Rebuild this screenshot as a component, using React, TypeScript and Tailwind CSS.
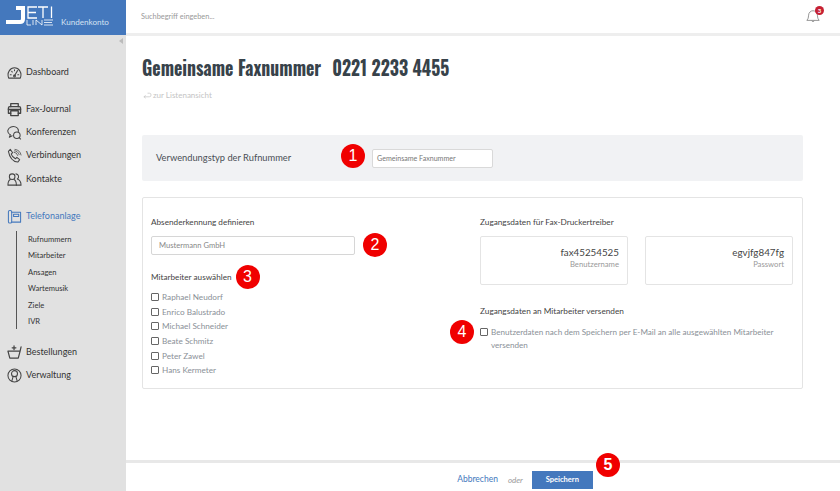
import React from "react";

const Ic = ({ children, className = "" }: { children: React.ReactNode; className?: string }) => (
  <svg viewBox="0 0 16 16" fill="none" stroke="#444" strokeWidth="1.100" strokeLinecap="round" strokeLinejoin="round" className={"w-[15px] h-[15px] shrink-0 " + className}>
    {children}
  </svg>
);

const icons: Record<string, React.ReactNode> = {
  dash: <><path d="M1.800 14C-.5 8 3.500 3 8 3s8.500 5 6.200 11z" /><path d="M8 11.500l3.200-5.500M3.500 10.500h1M11.500 10.500h1M5 6.800l.7.7M8 5v1" /><circle cx="8" cy="11.800" r="1" /></>,
  fax: <><path d="M4 5V1.800h8V5" strokeWidth="1.400" /><path d="M4 12H1.500V6.500q0-1.500 1.500-1.500h10q1.500 0 1.500 1.500V12H12" strokeWidth="1.400" /><path d="M4 9.500h8v5H4zM1.500 8h13" strokeWidth="1.400" /></>,
  conf: <><path d="M3.500 10.500C1 9 .5 7.500 1 5.500 2 2 6 1 9 2c2.500 1 3.500 3 3 5" /><path d="M3.500 10.500l-1 2.500 3-1.500" /><circle cx="10.500" cy="11" r="3.500" /><path d="M13 13.500l1.500 1.500" /></>,
  call: <><path d="M1.500 3.500L3.500 1.500 6 5 4.500 6.500q1 3 4.500 5L10.500 10l3 2.500-2 2.500Q3.500 14 1.500 3.500z" /><path d="M7.500 4.500q3 0 4 3.500M8.500 1.500q5.500.5 6.500 6M8 3q3.500 0 5 4" strokeWidth=".8" /></>,
  users: <><circle cx="5.500" cy="5" r="3" /><path d="M3.500 8C1.500 9 1 11 1 14h9c0-3-.5-5-2.500-6" /><path d="M9.500 2a3 3 0 0 1 1.500 5.500c2.500 1 4 3 4 6.500h-5" /></>,
  phone: <><rect x="1.500" y="1.500" width="3.500" height="13.500" rx="1.500" /><path d="M5 3.500h9.500v10.500H5" /><path d="M7 5.500h5.500v2.500H7z" /></>,
  cart: <><path d="M1 6.500l2 7.500h9l2-7.500zM1 6.500h13M14 6.500l1-4.500" strokeWidth="1.300" /><path d="M7.500 1v4M5.500 3h4" strokeWidth="1.300" /></>,
  admin: <><circle cx="8" cy="8" r="7" /><circle cx="8" cy="6" r="3.200" /><path d="M6.500 9.200l-1.300 4.500M9.500 9.200l1.300 4.500" /></>,
};

const NavItem = ({ icon, label, active = false, className = "" }: { icon: string; label: string; active?: boolean; className?: string }) => (
  <div className={"flex items-center gap-[4px] pl-[7px] h-[16px] " + className}>
    <Ic className={active ? "[&_*]:stroke-[#4478bd]" : ""}>{icons[icon]}</Ic>
    <span className={"text-[9px] leading-[16px] " + (active ? "text-[#4478bd]" : "text-[#333]")}>{label}</span>
  </div>
);

const Badge = ({ n, className = "" }: { n: number; className?: string }) => (
  <span className={"w-[24px] h-[24px] rounded-full bg-[#f00000] text-white flex items-center justify-center text-[16px] leading-none shrink-0 " + className} style={{ fontFamily: "Liberation Sans, sans-serif" }}>
    {n}
  </span>
);

const Check = ({ className = "" }: { className?: string }) => (
  <span className={"w-[6px] h-[6px] box-content border border-[#666] bg-white shrink-0 rounded-[1px] " + className} />
);

const names = ["Raphael Neudorf", "Enrico Balustrado", "Michael Schneider", "Beate Schmitz", "Peter Zawel", "Hans Kermeter"];
const subs = ["Rufnummern", "Mitarbeiter", "Ansagen", "Wartemusik", "Ziele", "IVR"];

export default function App() {
  return (
    <div className="w-[840px] h-[491px] flex overflow-hidden bg-white text-[#333]" style={{ fontFamily: "Lato, sans-serif" }}>
      <aside className="w-[126px] shrink-0 flex flex-col bg-[#e1e1e1]">
        <div className="h-[35px] bg-[#4478bd] flex items-start">
          <svg viewBox="0 0 56 30" className="w-[56px] h-[30px] shrink-0" fill="none" stroke="#fff">
            <path d="M16 8h7v11q0 3-3 3H6" strokeWidth="4" />
            <path d="M37 7h-9v11h9M28 12.500h8M38 7h10M43 7v11M51.500 6.500v11.500" strokeWidth="1.300" />
            <path d="M27 20v5h4M33 20v5M36 25v-5l6 5v-5M53 20h-9M44 22.500h8M44 25h9" strokeWidth=".8" />
          </svg>
          <span className="mt-[16px] ml-[5px] text-[8.100px] leading-[12px] text-[#d4e1f2]">Kundenkonto</span>
        </div>
        <div className="flex justify-end pr-[3px] pt-[3px] h-[10px]">
          <span className="w-0 h-0 border-y-[3px] border-y-transparent border-r-[4px] border-r-[#bbb]" />
        </div>
        <div className="flex flex-col mt-[19px]">
          <NavItem icon="dash" label="Dashboard" />
          <NavItem icon="fax" label="Fax-Journal" className="mt-[21px]" />
          <NavItem icon="conf" label="Konferenzen" className="mt-[7px]" />
          <NavItem icon="call" label="Verbindungen" className="mt-[7px]" />
          <NavItem icon="users" label="Kontakte" className="mt-[8px]" />
          <NavItem icon="phone" label="Telefonanlage" active className="mt-[21px]" />
          <div className="ml-[16px] mt-[7px] border-l border-[#555] pl-[11px] flex flex-col h-[98px] gap-[0px]">
            {subs.map((s) => (
              <div key={s} className="text-[7.600px] leading-[16.400px] text-[#333]">{s}</div>
            ))}
          </div>
          <NavItem icon="cart" label="Bestellungen" className="mt-[15px]" />
          <NavItem icon="admin" label="Verwaltung" className="mt-[7px]" />
        </div>
      </aside>

      <main className="flex-1 flex flex-col min-w-0">
        <div className="h-[36px] shrink-0 border-b-[3px] border-[#eeeeee] flex items-center justify-between pl-[15px] pr-[20px]">
          <span className="text-[7.400px] text-[#999] mb-[-1px]">Suchbegriff eingeben...</span>
          <div className="relative w-[14px] h-[14px] mb-[1px]">
            <svg viewBox="0 0 16 16" fill="none" stroke="#888" strokeWidth="1" className="w-[14px] h-[14px]">
              <path d="M1 13h14q-2-2-2-6a5 5 0 0 0-10 0q0 4-2 6zM6.500 13.500q1.500 2 3 0" />
            </svg>
            <span className="absolute -top-[3px] -right-[4px] w-[9px] h-[9px] rounded-full bg-[#c62033] text-white text-[6px] leading-[9px] text-center font-bold">3</span>
          </div>
        </div>

        <div className="flex-1 pl-[16px] pr-[37px] min-h-0">
          <h1 className="mt-[17px] text-[21px] leading-[28px] font-bold text-[#37424a] whitespace-pre origin-left scale-x-[0.845]" style={{ fontFamily: '"Liberation Sans Narrow", Oswald, "Liberation Sans", sans-serif' }}>
            Gemeinsame Faxnummer<span className="ml-[13px]">0221 2233 4455</span>
          </h1>
          <div className="mt-[8px] flex items-center gap-[1px] text-[8px] leading-[12px] text-[#c4c4c4] ml-[1px]">
            <svg viewBox="0 0 10 8" fill="none" stroke="#c4c4c4" strokeWidth="0.800" className="w-[9px] h-[8px]">
              <path d="M1 6h6q2 0 2-2t-2-2H5M1 6l2-1.500M1 6l2 1.500" />
            </svg>
            zur Listenansicht
          </div>

          <section className="mt-[34px] h-[46px] bg-[#f1f2f4] rounded-[2px] flex items-center pl-[14px]">
            <span className="w-[185px] text-[9.300px] text-[#4a4f55]">Verwendungstyp der Rufnummer</span>
            <Badge n={1} className="mr-[7px] mb-[4px]" />
            <div className="w-[121px] h-[19px] bg-white rounded-[2px] border border-[#d9d9d9] pl-[4px] text-[7.100px] leading-[17px] text-[#777]">Gemeinsame Faxnummer</div>
          </section>

          <section className="mt-[16px] h-[192px] border border-[#e4e4e4] rounded-[2px] flex pl-[8px] pr-[9px]">
            <div className="w-[280px] pt-[18px] shrink-0">
              <div className="text-[8.200px] leading-[12px] text-[#444]">Absenderkennung definieren</div>
              <div className="mt-[5px] flex items-center gap-[8px]">
                <div className="w-[204px] h-[19px] border border-[#d6d6d6] rounded-[2px] pl-[7px] text-[7.600px] leading-[17px] text-[#888]">Mustermann GmbH</div>
                <Badge n={2} />
              </div>
              <div className="mt-[8px] flex items-center gap-[4px]">
                <span className="text-[8.200px] leading-[12px] text-[#444]">Mitarbeiter auswählen</span>
                <Badge n={3} />
              </div>
              <div className="mt-[1px] flex flex-col">
                {names.map((n) => (
                  <div key={n} className="h-[14.600px] flex items-center gap-[3px]">
                    <Check />
                    <span className="text-[8.200px] text-[#8a9097]">{n}</span>
                  </div>
                ))}
              </div>
            </div>
            <div className="flex-1 pl-[49px] pt-[18px] min-w-0">
              <div className="text-[8.250px] leading-[12px] text-[#444]">Zugangsdaten für Fax-Druckertreiber</div>
              <div className="mt-[8px] flex gap-[17px]">
                <div className="flex-1 h-[49px] border border-[#e4e4e4] rounded-[2px] pr-[8px] pt-[8px] text-right">
                  <div className="text-[9.800px] leading-[14px] text-[#444]">fax45254525</div>
                  <div className="text-[7.700px] leading-[11px] text-[#999]">Benutzername</div>
                </div>
                <div className="flex-1 h-[49px] border border-[#e4e4e4] rounded-[2px] pr-[8px] pt-[8px] text-right">
                  <div className="text-[9.800px] leading-[14px] text-[#444]">egvjfg847fg</div>
                  <div className="text-[7.700px] leading-[11px] text-[#999]">Passwort</div>
                </div>
              </div>
              <div className="mt-[20px] text-[8.250px] leading-[12px] text-[#444]">Zugangsdaten an Mitarbeiter versenden</div>
              <div className="relative mt-[9px] flex gap-[3px]">
                <Badge n={4} className="absolute -left-[30px] -top-[6px]" />
                <Check className="mt-[2px]" />
                <span className="text-[8.100px] leading-[12.500px] text-[#8a9097]">Benutzerdaten nach dem Speichern per E-Mail an alle ausgewählten Mitarbeiter versenden</span>
              </div>
            </div>
          </section>
        </div>

        <footer className="h-[31px] shrink-0 border-t-[3px] border-[#e8e8e8] flex items-center justify-center">
          <div className="flex items-center ml-[84px] mt-[5px]">
            <span className="text-[8.500px] text-[#4478bd]">Abbrechen</span>
            <span className="text-[8px] italic text-[#999] ml-[10px] mr-[9px]">oder</span>
            <div className="relative w-[61px] h-[18px] bg-[#4478bd] text-white text-[7.500px] leading-[18px] text-center font-bold">
              Speichern
              <Badge n={5} className="absolute -right-[27px] -top-[18px]" />
            </div>
          </div>
        </footer>
      </main>
    </div>
  );
}
